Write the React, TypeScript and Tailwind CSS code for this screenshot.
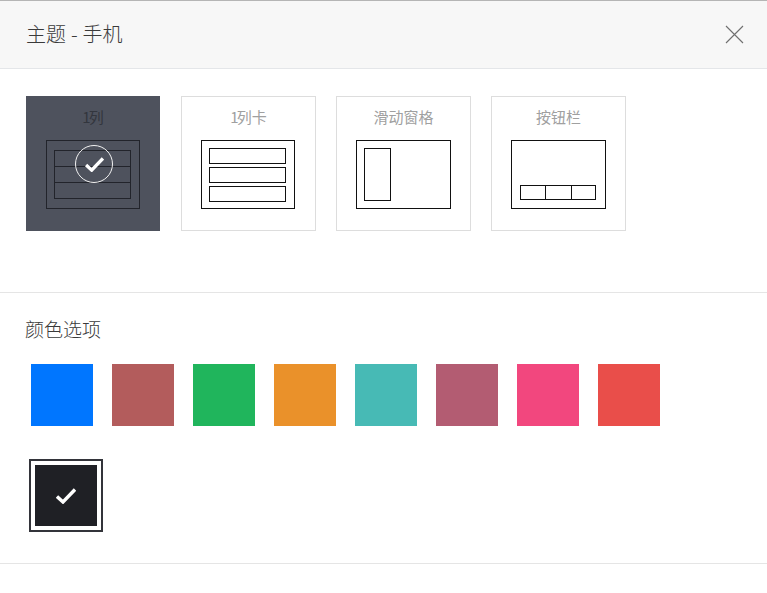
import React from "react";

const font = { fontFamily: '"Noto Sans CJK SC", "Noto Sans", sans-serif' };

function Check({ width, height, strokeWidth }: { width: number; height: number; strokeWidth: number }) {
  return (
    <svg width={width} height={height} viewBox="0 0 20 16" fill="none" stroke="#fff" strokeWidth={strokeWidth}>
      <path d="M1 8.5 L7 14 L19 1.5" />
    </svg>
  );
}

function Card({ label, active, shiftLeft, children }: { label: React.ReactNode; active?: boolean; shiftLeft?: boolean; children: React.ReactNode }) {
  return (
    <div
      className={
        "relative flex h-[135px] flex-col items-center " +
        (active ? "w-[134px] bg-[#4e525d] text-[#33363e]" : "w-[135px] border border-[#dddddd] text-[#a0a0a0]")
      }
    >
      <div className={"text-[15px] leading-[20px] " + (active ? "mt-[11px]" : "mt-[10px]")}>{label}</div>
      <div className={"mt-[13px] " + (shiftLeft ? "pr-[1px]" : "")}>{children}</div>
    </div>
  );
}

const colors = ["#0076ff", "#b35c5c", "#20b55c", "#ea912a", "#47bab5", "#b35c72", "#f2477e", "#e94e4a"];

export default function App() {
  return (
    <div className="h-[593px] w-[767px] overflow-hidden bg-white" style={font}>
      <div className="flex h-[69px] items-center justify-between border-t border-b border-t-[#b5b5b5] border-b-[#e4e6e9] bg-[#f7f7f7] pr-[23px] pb-[1px] pl-[26px]">
        <div className="text-[20px] leading-[24px] font-light text-[#3a3a3a] [word-spacing:0.5px]">主题 - 手机</div>
        <svg width="19" height="19" viewBox="0 0 19 19" fill="none" stroke="#6f6f6f" strokeWidth="1.1">
          <path d="M1 1 L18 18 M18 1 L1 18" />
        </svg>
      </div>

      <div className="flex h-[224px] gap-[20px] border-b border-[#e5e5e5] pt-[27px] pl-[26px]">
        <div className="relative mr-[1px]">
          <Card label={<><span className="tracking-[-2px]">1</span>列</>} active>
            <div className="flex h-[69px] w-[94px] items-center border border-[#22242b] pl-[7px]">
              <div className="flex h-[49px] w-[77px] flex-col border border-[#22242b]">
                <div className="h-[16px] border-b border-[#22242b]" />
                <div className="h-[16px] border-b border-[#22242b]" />
                <div className="flex-1" />
              </div>
            </div>
          </Card>
          <div className="absolute top-[49px] left-[49px] flex h-[38px] w-[38px] items-center justify-center rounded-full border border-[#f2f2f2]">
            <Check width={19} height={15} strokeWidth={3.6} />
          </div>
        </div>

        <Card label={<><span className="tracking-[-2px]">1</span>列卡</>} shiftLeft>
          <div className="flex h-[69px] w-[94px] flex-col gap-[3px] border border-[#111111] pt-[7px] pl-[7px]">
            <div className="h-[16px] w-[77px] border border-[#111111]" />
            <div className="h-[16px] w-[77px] border border-[#111111]" />
            <div className="h-[16px] w-[77px] border border-[#111111]" />
          </div>
        </Card>

        <Card label="滑动窗格">
          <div className="h-[69px] w-[95px] border border-[#111111] pt-[7px] pl-[7px]">
            <div className="h-[53px] w-[27px] border border-[#111111]" />
          </div>
        </Card>

        <Card label="按钮栏">
          <div className="h-[69px] w-[95px] border border-[#111111] pt-[44px] pl-[8px]">
            <div className="flex h-[15px] w-[76px] border border-[#111111]">
              <div className="w-[25px] border-r border-[#111111]" />
              <div className="w-[26px] border-r border-[#111111]" />
            </div>
          </div>
        </Card>
      </div>

      <div className="h-[271px] border-b border-[#e5e5e5]">
        <div className="pt-[24px] pl-[25px] text-[19px] leading-[24px] font-light text-[#3a3a3a]">颜色选项</div>
        <div className="mt-[23px] flex gap-[19px] pl-[31px]">
          {colors.map((c) => (
            <div key={c} className="h-[62px] w-[62px]" style={{ backgroundColor: c }} />
          ))}
        </div>
        <div className="mt-[33px] ml-[29px] flex h-[73px] w-[74px] items-center justify-center border-2 border-[#33343a] bg-white">
          <div className="flex h-[61px] w-[62px] items-center justify-center bg-[#1f2025]">
            <Check width={20} height={16} strokeWidth={3.4} />
          </div>
        </div>
      </div>
    </div>
  );
}
